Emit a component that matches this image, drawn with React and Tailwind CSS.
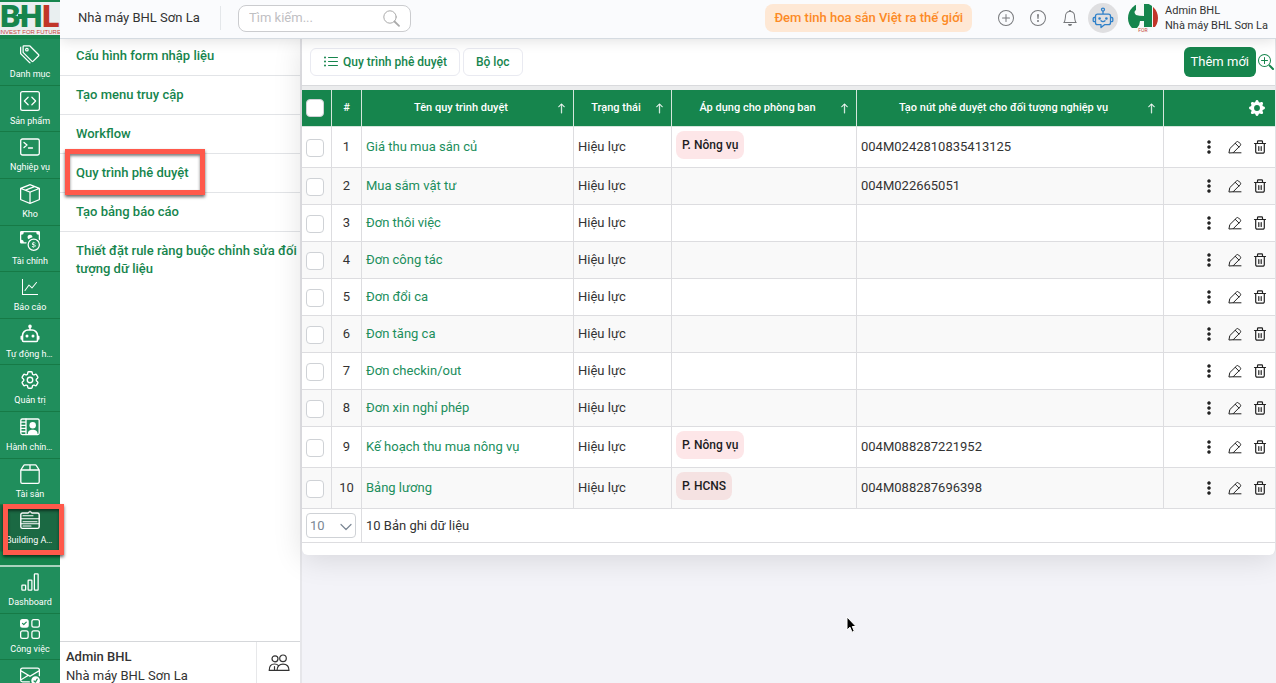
import React from "react";
import {
  BsTags, BsCodeSquare, BsBoxSeam, BsCashCoin, BsGraphUp, BsBarChart,
  BsUiChecksGrid, BsEnvelopeCheck, BsPlusCircle, BsExclamationCircle, BsBell,
  BsZoomIn, BsGearFill, BsThreeDotsVertical, BsListUl, BsArrowUp,
} from "react-icons/bs";
import { HiOutlineCog6Tooth } from "react-icons/hi2";

const Svg = ({ children, size = 20, view = 20, sw = 1.3 }) => (
  <svg width={size} height={size} viewBox={`0 0 ${view} ${view}`} fill="none" stroke="currentColor" strokeWidth={sw} strokeLinecap="round" strokeLinejoin="round" aria-hidden="true">
    {children}
  </svg>
);

const PromptIcon = () => (
  <Svg>
    <rect x="0.7" y="2" width="18.6" height="16" rx="1.8" />
    <path d="M4 5.5l3 2.5-3 2.5M8.5 11h4" />
  </Svg>
);

const RobotIcon = () => (
  <Svg sw={1.6}>
    <circle cx="10" cy="2.4" r="1" fill="currentColor" />
    <path d="M10 3v3M8 6h4a5.500 5.500 0 0 1 5.500 5.500v5a1 1 0 0 1-1 1h-13a1 1 0 0 1-1-1v-5A5.500 5.500 0 0 1 8 6zM1.300 12.500v2.500M18.700 12.500v2.500" />
    <circle cx="7" cy="12" r="1.5" fill="currentColor" stroke="none" />
    <circle cx="13" cy="12" r="1.5" fill="currentColor" stroke="none" />
  </Svg>
);

const ContactIcon = () => (
  <Svg>
    <rect x="0.8" y="2" width="18.4" height="15.6" rx="1.5" />
    <path d="M6 2v15.6M1 5.2h5M1 8.3h5M1 11.4h5M1 14.5h5" />
    <circle cx="12.7" cy="8.2" r="3.2" fill="currentColor" stroke="none" />
    <path d="M7.8 17c0-3.2 2.2-4.3 4.9-4.3s4.9 1.1 4.9 4.3z" fill="currentColor" stroke="none" />
  </Svg>
);

const AssetIcon = () => (
  <Svg>
    <path d="M.8 6v12a1.3 1.3 0 0 0 1.3 1.3h15.8a1.3 1.3 0 0 0 1.3-1.3V6l-3-4.6a1 1 0 0 0-.9-.5H4.7a1 1 0 0 0-.9.5zM.8 6h18.4M10 1v5" />
  </Svg>
);

const BuildingIcon = () => (
  <Svg sw={1.4}>
    <path d="M2.500 3H8l2-1.800L12 3h5.500a1.700 1.700 0 0 1 1.700 1.700v12a1.700 1.700 0 0 1-1.700 1.700h-15a1.700 1.700 0 0 1-1.700-1.700v-12A1.700 1.700 0 0 1 2.500 3z" />
    <path d="M3 5.800h10M1 8.800h18M3 11.800h14M1 13.800h18M3 16h8" strokeWidth="1.100" />
  </Svg>
);

const PeopleIcon = () => (
  <Svg size={22} view={22} sw={1.2}>
    <circle cx="7" cy="6.800" r="3" />
    <circle cx="15" cy="6.300" r="3.300" />
    <path d="M9 18.400c0-4 2.500-6.200 6-6.200s6 2.200 6 6.200zM9 18.400H1.200c0-4 2-6.400 5.300-6.400 1.700 0 3 .5 4 1.600M6.500 14.500v3.500" />
  </Svg>
);

const PencilIcon = () => (
  <Svg size={14} view={14} sw={1}>
    <path d="M1 12.600l.8-4L8.500 2a1.500 1.500 0 0 1 2.100 0l1.600 1.600a1.500 1.500 0 0 1 0 2.100L5.400 12.500zM7.200 3.300l3.700 3.700M5.400 12.800H13" />
  </Svg>
);

const TrashIcon = () => (
  <Svg size={14} view={14} sw={1.2}>
    <path d="M1.500 3.500h11M4.500 3.300V1.700a.8.8 0 0 1 .8-.8h3.400a.8.8 0 0 1 .8.8v1.600M2.700 3.700v8a1.500 1.500 0 0 0 1.500 1.500h5.600a1.500 1.500 0 0 0 1.500-1.500v-8M5.800 6.500v4M8.200 6.500v4" />
  </Svg>
);

const ChatBotIcon = () => (
  <Svg size={22} view={22} sw={1.3}>
    <circle cx="11" cy="2.600" r="1.500" />
    <path d="M11 4.200v3M5.500 7.200h11a2 2 0 0 1 2 2v6.500a2 2 0 0 1-2 2h-4L9 20.600v-2.900H5.500a2 2 0 0 1-2-2V9.200a2 2 0 0 1 2-2zM3.300 10.500H2.200a1 1 0 0 0-1 1v2.200a1 1 0 0 0 1 1h1.100M18.700 10.500h1.100a1 1 0 0 1 1 1v2.200a1 1 0 0 1-1 1h-1.100M9 13.800c1 1 3 1 4 0" />
    <circle cx="7.600" cy="11.500" r=".7" />
    <circle cx="14.400" cy="11.500" r=".7" />
  </Svg>
);

const mainNav = [
  ["Danh mục", <BsTags size={20} />],
  ["Sản phẩm", <BsCodeSquare size={20} />],
  ["Nghiệp vụ", <PromptIcon />],
  ["Kho", <BsBoxSeam size={20} />],
  ["Tài chính", <BsCashCoin size={20} />],
  ["Báo cáo", <BsGraphUp size={16} />],
  ["Tự động hóa", <RobotIcon />],
  ["Quản trị", <HiOutlineCog6Tooth size={22} />],
  ["Hành chính nhân sự", <ContactIcon />],
  ["Tài sản", <AssetIcon />],
  ["Building App", <BuildingIcon />, true],
];

const secondNav = [
  ["Dashboard", <BsBarChart size={20} />],
  ["Công việc", <BsUiChecksGrid size={20} />],
  ["Phê duyệt", <BsEnvelopeCheck size={20} />],
];

const menu = [
  "Cấu hình form nhập liệu",
  "Tạo menu truy cập",
  "Workflow",
  "Quy trình phê duyệt",
  "Tạo bảng báo cáo",
  "Thiết đặt rule ràng buộc chỉnh sửa đối tượng dữ liệu",
];

const rows = [
  ["Giá thu mua sắn củ", "P. Nông vụ", "004M0242810835413125"],
  ["Mua sắm vật tư", "", "004M022665051"],
  ["Đơn thôi việc", "", ""],
  ["Đơn công tác", "", ""],
  ["Đơn đổi ca", "", ""],
  ["Đơn tăng ca", "", ""],
  ["Đơn checkin/out", "", ""],
  ["Đơn xin nghỉ phép", "", ""],
  ["Kế hoạch thu mua nông vụ", "P. Nông vụ", "004M088287221952"],
  ["Bảng lương", "P. HCNS", "004M088287696398"],
];

const columns = ["Tên quy trình duyệt", "Trạng thái", "Áp dụng cho phòng ban", "Tạo nút phê duyệt cho đối tượng nghiệp vụ"];

function NavItem({ label, icon, active }) {
  return (
    <a
      href="#"
      className={`relative flex min-h-0 flex-1 flex-col items-center border-b border-[#167a46] pt-[3px] text-white ${active ? "bg-[#1b6943]" : "bg-[#208e5c]"}`}
    >
      <span className="flex h-6 shrink-0 items-center justify-center">{icon}</span>
      <span className="mt-[2px] w-full truncate px-[6px] text-center text-[9px] leading-3">{label}</span>
      {active && <span className="pointer-events-none absolute -right-1 -bottom-1 -top-px left-[3px] border-5 border-[#ff594b] shadow-[0_2px_3px_rgba(0,0,0,0.6),inset_0_2px_3px_rgba(0,0,0,0.5)]" />}
    </a>
  );
}

function Logo() {
  return (
    <svg viewBox="0 0 60 35" className="block h-[35px] w-full shrink-0" role="img" aria-label="BHL Invest for Future">
      <rect y="2" width="60" height="33" fill="#e9eff0" />
      <g fontFamily="Roboto, sans-serif" fontWeight="900" fontSize="32">
        <text x="0" y="27" fill="#16854d">B</text>
        <text x="20" y="27" fill="#16854d">H</text>
        <text x="42" y="27" fill="#c13529">L</text>
      </g>
      <path d="M18 14h7v5h-7z" fill="#16854d" />
      <text x="30" y="34" textAnchor="middle" fontFamily="Liberation Sans, sans-serif" fontSize="6" fill="#c9473c">INVEST FOR FUTURE</text>
    </svg>
  );
}

function Avatar() {
  return (
    <svg viewBox="0 0 30 30" className="size-[30px] shrink-0" role="img" aria-label="Admin BHL">
      <defs><clipPath id="avatarClip"><circle cx="15" cy="15" r="15" /></clipPath></defs>
      <g clipPath="url(#avatarClip)">
        <rect width="30" height="30" fill="#f7faf8" />
        <path d="M0 6l8-5v6q-3 2 0 5 3 1 8 1V1h8v23h-8v-6h-4q0 4-3 7H0z" fill="#16854d" />
        <path d="M25 0H30v24h-5z" fill="#c13529" />
        <text x="15" y="29" textAnchor="middle" fontFamily="Roboto, sans-serif" fontSize="5" fill="#c9473c">FOR</text>
      </g>
    </svg>
  );
}

const boxClass = "block size-[18px] appearance-none rounded border border-[#cfd2d6] bg-white checked:bg-[#16854d]";

export default function App() {
  return (
    <div className="relative flex h-screen overflow-hidden bg-[#f3f3f8] font-['Roboto',sans-serif] text-[13px] leading-[18px] text-[#333]">
      <nav className="relative z-30 flex w-[60px] shrink-0 flex-col bg-[#16854d]" aria-label="Chính">
        <Logo />
        <div className="mt-1 flex h-[513px] shrink-0 flex-col">
          {mainNav.map(([label, icon, active]) => (
            <NavItem key={label} label={label} icon={icon} active={active} />
          ))}
        </div>
        <div className="mt-[13px] flex h-[142px] shrink-0 flex-col border-t-2 border-[#a9d3bd]">
          {secondNav.map(([label, icon]) => (
            <NavItem key={label} label={label} icon={icon} />
          ))}
        </div>
      </nav>

      <div className="flex min-w-0 flex-1 flex-col">
        <header className="relative z-20 flex h-[39px] shrink-0 items-center border-b border-[#d5dbe1] bg-[#fafbfd] pb-[2px] shadow-[0_2px_14px_rgba(0,0,0,0.12)]">
          <span className="ml-[18px] w-[142px]">Nhà máy BHL Sơn La</span>
          <div className="h-6 border-l border-[#e4e7ea]" />
          <label className="ml-[17px] flex h-[27px] w-[173px] items-center rounded-lg border border-[#cbcccf] bg-white pr-[10px] pl-[10px]">
            <input type="search" placeholder="Tìm kiếm..." aria-label="Tìm kiếm" className="min-w-0 flex-1 bg-transparent outline-none placeholder:text-[#bfc0c3]" />
            <Svg size={17} view={17} sw={1}>
              <circle cx="7" cy="7" r="6.200" className="stroke-[#aaa]" />
              <path d="M11.500 11.500l4.500 4.300" className="stroke-[#aaa]" strokeWidth="1.800" />
            </Svg>
          </label>
          <div className="ml-auto flex items-center">
            <span className="rounded-lg bg-[#fee8d5] px-[9px] py-[5px] font-medium text-[#fc8a26]">Đem tinh hoa sắn Việt ra thế giới</span>
            <div className="ml-[26px] flex items-center gap-4 text-[#77797c]">
              <button aria-label="Thêm"><BsPlusCircle size={16} className="block" /></button>
              <button aria-label="Thông tin"><BsExclamationCircle size={16} className="block" /></button>
              <button aria-label="Thông báo"><BsBell size={16} className="block" /></button>
            </div>
            <button aria-label="Trợ lý" className="ml-[10px] flex size-[30px] items-center justify-center rounded-full bg-[#dfdfe1] text-[#2f80c9]"><ChatBotIcon /></button>
            <span className="ml-[10px]"><Avatar /></span>
            <div className="mr-2 ml-[7px] text-[11px] leading-[15px]">
              <div>Admin BHL</div>
              <div>Nhà máy BHL Sơn La</div>
            </div>
          </div>
        </header>

        <div className="flex min-h-0 flex-1">
          <aside className="flex w-[242px] shrink-0 flex-col border-r-2 border-[#e6e6ea] bg-white">
            <ul className="-mt-[2px] font-medium text-[#16854d]">
              {menu.map((m) => (
                <li key={m} className="relative border-b border-[#e2e4e7] pt-[10px] pr-px pb-[10px] pl-4 last:border-0">
                  <a href="#" className="block">{m}</a>
                  {m === "Quy trình phê duyệt" && (
                    <span className="pointer-events-none absolute -top-[5px] -bottom-[3px] left-[5px] w-[140px] border-5 border-[#ff594b] shadow-[0_2px_3px_rgba(0,0,0,0.6),inset_0_2px_3px_rgba(0,0,0,0.5)]" />
                  )}
                </li>
              ))}
            </ul>
            <div className="mt-auto flex h-[42px] border-t border-[#d5d7da]">
              <div className="flex-1 pt-[5px] pl-[6px] leading-[19px]">
                <div className="font-medium">Admin BHL</div>
                <div>Nhà máy BHL Sơn La</div>
              </div>
              <button aria-label="Người dùng" className="flex w-11 items-center justify-center border-l border-[#e7e8ea]"><PeopleIcon /></button>
            </div>
          </aside>

          <main className="relative min-w-0 flex-1">
            <section className="rounded-b-md border-r border-[#e2e3e6] bg-white pb-3 shadow-[0_4px_30px_rgba(0,0,0,0.12)]">
              <div className="flex h-[47px] items-center border-b border-[#d9dadd]">
                <button className="ml-2 flex h-7 items-center gap-1 rounded-md border border-[#e9eaf1] px-3 text-[12px] font-medium text-[#16854d]">
                  <BsListUl size={16} />Quy trình phê duyệt
                </button>
                <button className="ml-[3px] h-7 rounded-md border border-[#e9eaf1] px-3 text-[12px] font-medium text-[#16854d]">Bộ lọc</button>
                <button className="ml-auto h-[30px] rounded-md bg-[#16854d] px-[7px] text-white">Thêm mới</button>
                <button aria-label="Phóng to" className="mr-px ml-[2px] text-[#16854d]"><BsZoomIn size={16} className="block" /></button>
              </div>
              <div className="h-1 bg-[#ebeced]" />
              <table className="w-full table-fixed border-separate border-spacing-0">
                <colgroup>
                  <col className="w-[30px]" />
                  <col className="w-[30px]" />
                  <col className="w-[212px]" />
                  <col className="w-[98px]" />
                  <col className="w-[185px]" />
                  <col />
                  <col className="w-[111px]" />
                </colgroup>
                <thead className="bg-[#16854d] text-[11px] text-white">
                  <tr className="h-[37px] *:border-b *:border-[#d5e6dc]">
                    <th className="border-r pl-1"><input type="checkbox" aria-label="Chọn tất cả" className={boxClass} /></th>
                    <th className="border-r font-medium">#</th>
                    {columns.map((c) => (
                      <th key={c} className="border-r font-medium">
                        <div className="flex items-center pr-[6px] pl-1">
                          <span className="flex-1 whitespace-nowrap">{c}</span>
                          <BsArrowUp size={11} strokeWidth={0.5} />
                        </div>
                      </th>
                    ))}
                    <th className="pr-[10px]"><button aria-label="Cài đặt" className="ml-auto block"><BsGearFill size={16} className="block" /></button></th>
                  </tr>
                </thead>
                <tbody>
                  {rows.map(([name, dept, code], i) => (
                    <tr key={name} className={`${dept ? "h-[41px]" : "h-[37px]"} ${i % 2 ? "bg-[#f9f9f9]" : "bg-white"} *:border-b *:border-[#dddde0] *:p-0`}>
                      <td className="border-r"><input type="checkbox" aria-label={`Chọn ${name}`} className={`${boxClass} mt-px ml-1`} /></td>
                      <td className="border-r text-center">{i + 1}</td>
                      <td className="border-r"><a href="#" className="ml-1 text-[#208e5c]">{name}</a></td>
                      <td className="border-r"><span className="ml-1">Hiệu lực</span></td>
                      <td className="border-r align-top">
                        {dept && <span className={`mt-1 ml-1 inline-block rounded-lg px-[6px] py-[5px] text-[12px] font-medium text-[#1c1c1e] ${i % 2 ? "bg-[#f5e2e2]" : "bg-[#fde6e8]"}`}>{dept}</span>}
                      </td>
                      <td className="border-r"><span className="ml-1">{code}</span></td>
                      <td>
                        <div className="flex items-center justify-end gap-[11px] pr-2 text-[#222]">
                          <button aria-label="Thao tác khác"><BsThreeDotsVertical size={16} className="block" strokeWidth={0.5} /></button>
                          <button aria-label="Sửa"><PencilIcon /></button>
                          <button aria-label="Xóa"><TrashIcon /></button>
                        </div>
                      </td>
                    </tr>
                  ))}
                </tbody>
                <tfoot>
                  <tr className="h-[34px] *:border-b *:border-[#dddde0] *:p-0">
                    <td colSpan="2" className="border-r">
                      <div className="relative ml-1 w-[50px]">
                        <select aria-label="Số bản ghi" className="block h-[25px] w-full appearance-none rounded border border-[#cfd2d6] bg-white pl-[3px] text-[#7b8794]">
                          <option>10</option>
                          <option>20</option>
                        </select>
                        <span className="pointer-events-none absolute top-[8px] right-[4px] text-[#7b8794]">
                          <Svg size={12} view={12} sw={1.2}><path d="M1 3.500l5 5 5-5" /></Svg>
                        </span>
                      </div>
                    </td>
                    <td colSpan="5"><span className="ml-1">10 Bản ghi dữ liệu</span></td>
                  </tr>
                </tfoot>
              </table>
            </section>
          </main>
        </div>
      </div>

      <svg className="pointer-events-none absolute top-[616px] left-[846px] z-40" width="11" height="18" viewBox="0 0 11 18" aria-hidden="true">
        <path d="M1 1v13l3-2.800 2 5 2.300-1-2-4.700H10z" fill="#000" stroke="#fff" strokeWidth="1" />
      </svg>
    </div>
  );
}
